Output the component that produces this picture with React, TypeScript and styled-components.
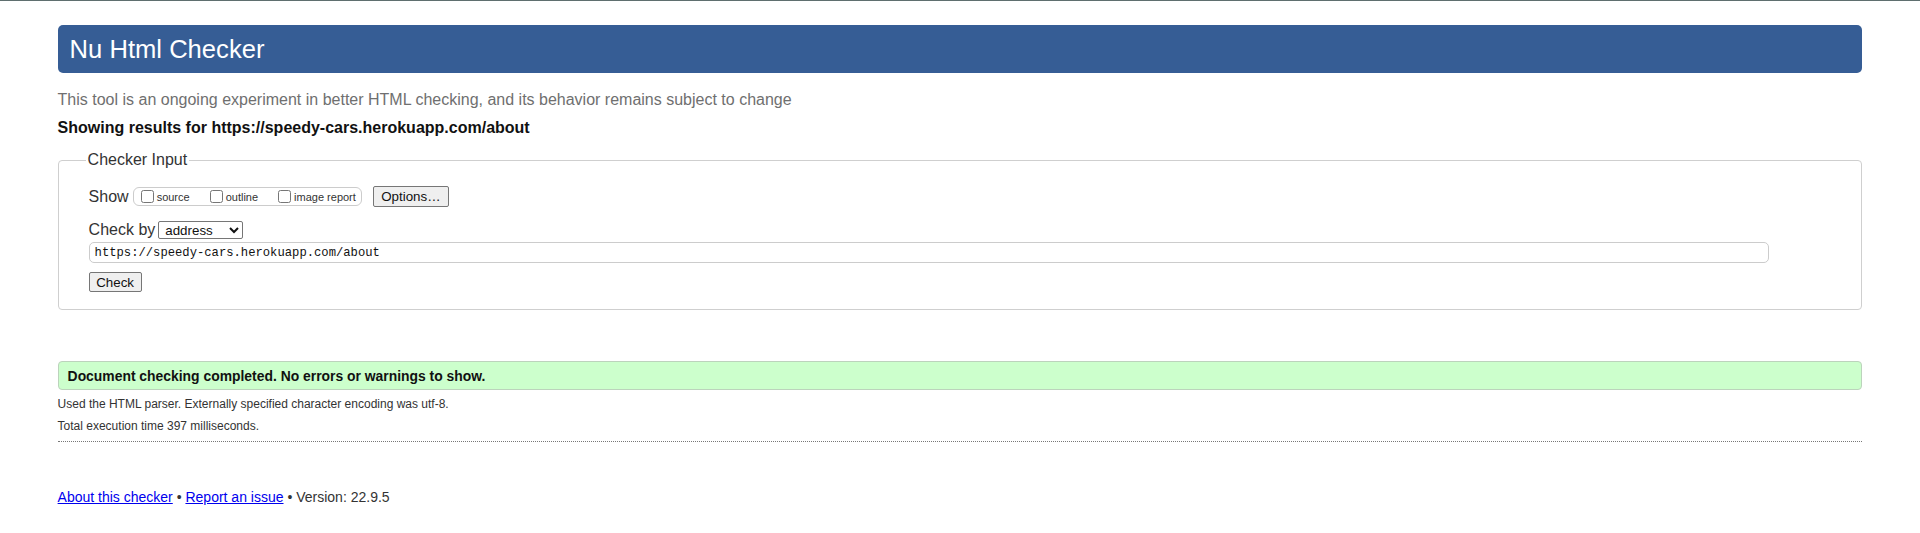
import React from "react";
import styled, { createGlobalStyle } from "styled-components";

const GlobalStyle = createGlobalStyle`
  html, body {
    margin: 0;
    background: #fff;
  }
  body {
    border-top: 1px solid #5f6f6f;
    font-family: "Liberation Sans", Arial, sans-serif;
    color: #333;
  }
`;

const Page = styled.div`
  padding: 24px 3% 0;
  display: flex;
  flex-direction: column;
`;

const Title = styled.h1`
  margin: 0;
  height: 48px;
  padding: 0 12px;
  display: flex;
  align-items: center;
  background: #365d95;
  color: #fff;
  font-size: 25.6px;
  font-weight: normal;
  border-radius: 5px;
`;

const About = styled.p`
  margin: 18px 0 0;
  font-size: 16px;
  color: #6f6f6f;
`;

const Results = styled.p`
  margin: 10px 0 0;
  font-size: 16px;
  font-weight: bold;
  color: #111;
`;

const Fieldset = styled.fieldset`
  margin: 14px 0 0;
  padding: 17px 30px 17px;
  border: 1px solid #cfcfcf;
  border-radius: 4px;
  min-width: 0;
`;

const Legend = styled.legend`
  margin-left: -3px;
  padding: 0 2px;
  font-size: 16px;
  color: #333;
`;

const Row = styled.div<{ $top?: number }>`
  display: flex;
  align-items: center;
  margin-top: ${(p) => p.$top ?? 0}px;
`;

const Label = styled.span`
  font-size: 16px;
  color: #333;
  margin-right: 3px;
`;

const OptionGroup = styled.div`
  display: flex;
  align-items: center;
  gap: 20px;
  height: 19px;
  box-sizing: border-box;
  margin-left: 1px;
  padding: 0 5px 0 7px;
  border: 1px solid #ccc;
  border-radius: 6px;
`;

const Choice = styled.label`
  display: flex;
  align-items: center;
  font-size: 11px;
  color: #333;
`;

const Box = styled.input`
  width: 13px;
  height: 13px;
  margin: 0 3px 0 0;
`;

const Button = styled.button<{ $w: number; $h: number }>`
  width: ${(p) => p.$w}px;
  height: ${(p) => p.$h}px;
  padding: 0;
  font-family: "Liberation Sans", Arial, sans-serif;
  font-size: 13.33px;
  color: #111;
  background: #efefef;
  border: 1px solid #767676;
  border-radius: 2px;
`;

const Select = styled.select`
  width: 85px;
  height: 18px;
  padding: 0 2px;
  font-family: "Liberation Sans", Arial, sans-serif;
  font-size: 13.33px;
  color: #111;
  background: #fff;
  border: 1px solid #767676;
  border-radius: 2px;
`;

const UrlInput = styled.input`
  width: calc(100% - 62px);
  height: 21px;
  box-sizing: border-box;
  margin-top: 3px;
  padding: 0 5px;
  font-family: "Liberation Mono", "DejaVu Sans Mono", monospace;
  font-size: 12.2px;
  color: #111;
  border: 1px solid #ccc;
  border-radius: 5px;
`;

const Success = styled.div`
  margin-top: 51px;
  height: 29px;
  box-sizing: border-box;
  padding: 0 9px;
  display: flex;
  align-items: center;
  background: #ccffcc;
  border: 1px solid #bcd3bc;
  border-radius: 4px;
  font-size: 13.9px;
  font-weight: bold;
  color: #111;
`;

const Details = styled.div`
  display: flex;
  flex-direction: column;
  gap: 8px;
  margin-top: 7px;
  padding-bottom: 8px;
  border-bottom: 1px dotted #777;
`;

const Note = styled.p`
  margin: 0;
  height: 14px;
  line-height: 14px;
  font-size: 12px;
  color: #333;
`;

const Footer = styled.p`
  margin: 47px 0 0;
  font-size: 14px;
  color: #333;
`;

const Link = styled.a`
  color: #0000ee;
  text-decoration: underline;
`;

export default function App() {
  const url = "https://speedy-cars.herokuapp.com/about";
  return (
    <>
      <GlobalStyle />
      <Page>
        <Title>Nu Html Checker</Title>
        <About>
          This tool is an ongoing experiment in better HTML checking, and its behavior remains subject to change
        </About>
        <Results>Showing results for {url}</Results>
        <Fieldset>
          <Legend>Checker Input</Legend>
          <Row>
            <Label>Show</Label>
            <OptionGroup>
              <Choice>
                <Box type="checkbox" />
                source
              </Choice>
              <Choice>
                <Box type="checkbox" />
                outline
              </Choice>
              <Choice>
                <Box type="checkbox" />
                image report
              </Choice>
            </OptionGroup>
            <Button $w={76} $h={21} style={{ marginLeft: 11 }}>
              Options…
            </Button>
          </Row>
          <Row $top={14}>
            <Label>Check by</Label>
            <Select defaultValue="address">
              <option value="address">address</option>
              <option value="file">file upload</option>
              <option value="text">text input</option>
            </Select>
          </Row>
          <UrlInput type="url" defaultValue={url} />
          <Row $top={9}>
            <Button $w={53} $h={20}>
              Check
            </Button>
          </Row>
        </Fieldset>
        <Success>Document checking completed. No errors or warnings to show.</Success>
        <Details>
          <Note>Used the HTML parser. Externally specified character encoding was utf-8.</Note>
          <Note>Total execution time 397 milliseconds.</Note>
        </Details>
        <Footer>
          <Link href="#">About this checker</Link> • <Link href="#">Report an issue</Link> • Version: 22.9.5
        </Footer>
      </Page>
    </>
  );
}
